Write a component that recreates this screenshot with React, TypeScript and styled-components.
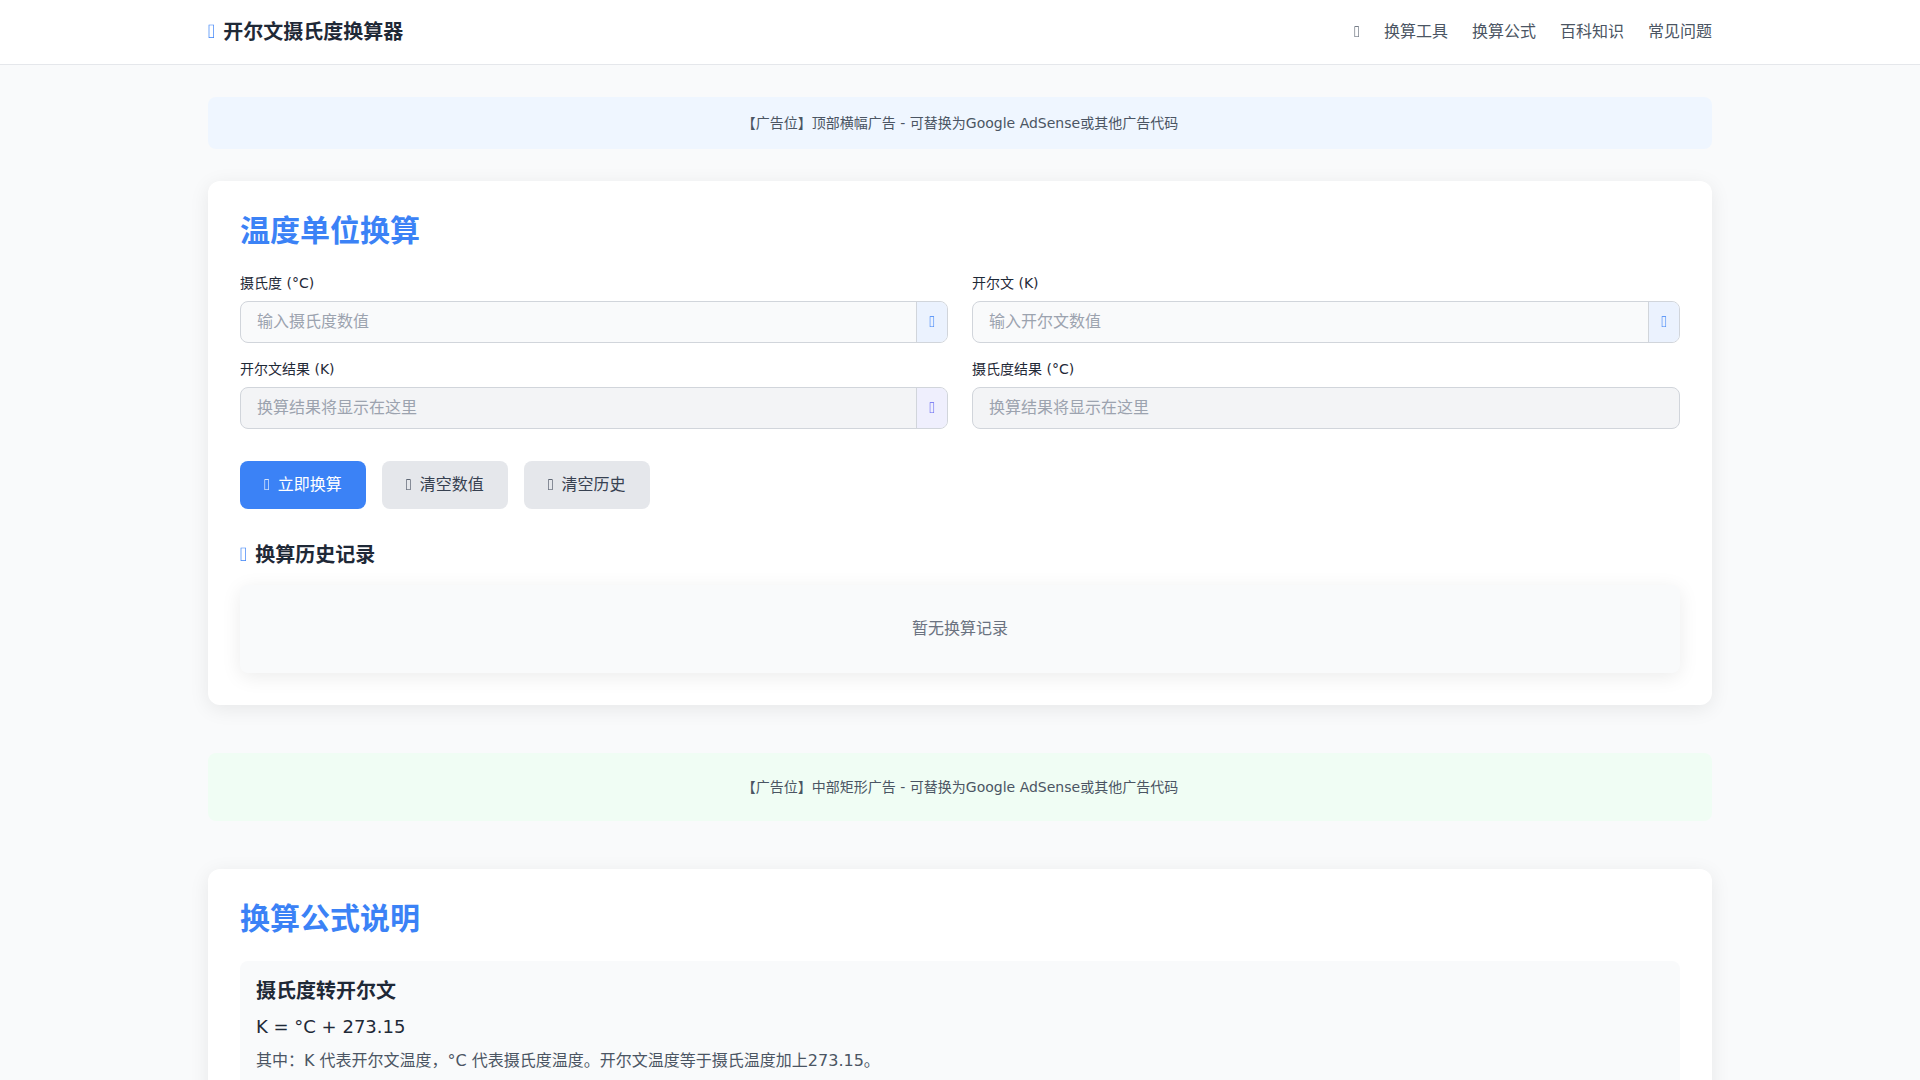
import React, { useState } from "react";
import styled, { createGlobalStyle } from "styled-components";

const GlobalStyle = createGlobalStyle`
  *, *::before, *::after { box-sizing: border-box; }
  body {
    margin: 0;
    background: #f9fafb;
    color: #1f2937;
    font-family: "DejaVu Sans", "Noto Sans CJK SC", sans-serif;
    font-size: 16px;
    line-height: 24px;
  }
  h1, h2, h3, p { margin: 0; }
  button, input { font: inherit; }
`;

const Header = styled.header`
  background: #ffffff;
  border-bottom: 1px solid #e5e7eb;
`;

const Container = styled.div`
  width: 100%;
  max-width: 1536px;
  margin: 0 auto;
  padding: 0 16px;
`;

const HeaderRow = styled(Container)`
  display: flex;
  align-items: center;
  justify-content: space-between;
  height: 64px;
`;

const Glyph = styled.i.attrs({ "aria-hidden": true })<{ $color?: string }>`
  font-family: "WenQuanYi Zen Hei", "Noto Sans", sans-serif;
  font-style: normal;
  font-weight: 400;
  line-height: 1;
  color: ${(p) => p.$color ?? "inherit"};
`;

const IconTitle = styled.div`
  display: flex;
  align-items: center;
  gap: 8px;
  font-size: 20px;
  line-height: 28px;
`;

const Brand = styled.h1`
  font-size: 20px;
  line-height: 28px;
  font-weight: 700;
`;

const Nav = styled.nav`
  display: flex;
  align-items: center;
  gap: 24px;
  color: #4b5563;
`;

const NavLink = styled.a`
  color: inherit;
  text-decoration: none;
  &:hover { color: #3b82f6; }
`;

const ThemeToggle = styled.button`
  padding: 0;
  border: 0;
  background: none;
  color: inherit;
  cursor: pointer;
`;

const Main = styled(Container).attrs({ as: "main" })`
  padding-top: 32px;
  padding-bottom: 32px;
`;

const AdSlot = styled.aside<{ $bg: string; $pad: number; $gap: number }>`
  padding: ${(p) => p.$pad}px 16px;
  margin-bottom: ${(p) => p.$gap}px;
  border-radius: 8px;
  background: ${(p) => p.$bg};
  color: #4b5563;
  font-size: 14px;
  line-height: 20px;
  text-align: center;
`;

const Card = styled.section`
  padding: 32px;
  margin-bottom: 48px;
  border-radius: 12px;
  background: #ffffff;
  box-shadow: 0 4px 20px rgba(0, 0, 0, 0.08);
`;

const CardTitle = styled.h2`
  margin-bottom: 24px;
  color: #3b82f6;
  font-size: 30px;
  line-height: 36px;
  font-weight: 700;
`;

const Fields = styled.div`
  display: grid;
  grid-template-columns: repeat(2, minmax(0, 1fr));
  gap: 16px 24px;
`;

const Label = styled.label`
  display: block;
  margin-bottom: 8px;
  font-size: 14px;
  line-height: 20px;
`;

const InputGroup = styled.div<{ $readOnly?: boolean }>`
  display: flex;
  height: 42px;
  overflow: hidden;
  border: 1px solid #d1d5db;
  border-radius: 8px;
  background: ${(p) => (p.$readOnly ? "#f3f4f6" : "#f9fafb")};
`;

const Input = styled.input`
  flex: 1;
  min-width: 0;
  padding: 8px 16px;
  border: 0;
  outline: 0;
  background: transparent;
  color: #1f2937;
  &::placeholder { color: #9ca3af; opacity: 1; }
`;

const Addon = styled.span<{ $bg: string }>`
  display: flex;
  align-items: center;
  padding: 0 12px;
  border-left: 1px solid #d1d5db;
  background: ${(p) => p.$bg};
`;

const Actions = styled.div`
  display: flex;
  gap: 16px;
  margin: 32px 0;
`;

const Button = styled.button<{ $primary?: boolean }>`
  display: flex;
  align-items: center;
  gap: 8px;
  padding: 12px 24px;
  border: 0;
  border-radius: 8px;
  background: ${(p) => (p.$primary ? "#3b82f6" : "#e5e7eb")};
  color: ${(p) => (p.$primary ? "#ffffff" : "#374151")};
  cursor: pointer;
`;

const SubTitle = styled.h3`
  font-size: 20px;
  line-height: 28px;
  font-weight: 700;
`;

const History = styled.div`
  margin-top: 16px;
  padding: 32px;
  border-radius: 8px;
  background: #f9fafb;
  color: #6b7280;
  text-align: center;
  box-shadow: 0 4px 20px rgba(0, 0, 0, 0.08);
`;

const FormulaBox = styled.div`
  display: grid;
  gap: 8px;
  padding: 16px;
  border-radius: 8px;
  background: #f9fafb;
`;

const Formula = styled.p`
  font-size: 18px;
  line-height: 28px;
`;

const Note = styled.p`
  color: #4b5563;
`;

const blue = "#3b82f6";
const indigo = "#6366f1";

type FieldProps = {
  id: string;
  label: string;
  placeholder: string;
  value: string;
  onChange?: (v: string) => void;
  addon?: { glyph: string; color: string; bg: string };
};

function Field({ id, label, placeholder, value, onChange, addon }: FieldProps) {
  return (
    <div>
      <Label htmlFor={id}>{label}</Label>
      <InputGroup $readOnly={!onChange}>
        <Input
          id={id}
          placeholder={placeholder}
          value={value}
          readOnly={!onChange}
          onChange={(e) => onChange?.(e.target.value)}
        />
        {addon && (
          <Addon $bg={addon.bg}>
            <Glyph $color={addon.color}>{addon.glyph}</Glyph>
          </Addon>
        )}
      </InputGroup>
    </div>
  );
}

export default function App() {
  const [celsius, setCelsius] = useState("");
  const [kelvin, setKelvin] = useState("");
  const [results, setResults] = useState({ k: "", c: "" });
  const [history, setHistory] = useState<string[]>([]);

  const convert = () => {
    const k = celsius === "" ? "" : (Number(celsius) + 273.15).toFixed(2);
    const c = kelvin === "" ? "" : (Number(kelvin) - 273.15).toFixed(2);
    setResults({ k, c });
    const rows = [k && `${celsius} °C = ${k} K`, c && `${kelvin} K = ${c} °C`].filter(Boolean);
    setHistory([...rows, ...history]);
  };

  const clear = () => {
    setCelsius("");
    setKelvin("");
    setResults({ k: "", c: "" });
  };

  return (
    <>
      <GlobalStyle />
      <Header>
        <HeaderRow>
          <IconTitle>
            <Glyph $color={blue}>{"\uf2c9"}</Glyph>
            <Brand>开尔文摄氏度换算器</Brand>
          </IconTitle>
          <Nav>
            <ThemeToggle type="button" aria-label="切换主题"><Glyph>{"\uf186"}</Glyph></ThemeToggle>
            <NavLink href="#converter">换算工具</NavLink>
            <NavLink href="#formula">换算公式</NavLink>
            <NavLink href="#knowledge">百科知识</NavLink>
            <NavLink href="#faq">常见问题</NavLink>
          </Nav>
        </HeaderRow>
      </Header>
      <Main>
        <AdSlot $bg="#eff6ff" $pad={16} $gap={32}>
          【广告位】顶部横幅广告 - 可替换为Google AdSense或其他广告代码
        </AdSlot>
        <Card id="converter">
          <CardTitle>温度单位换算</CardTitle>
          <Fields>
            <Field id="celsius" label="摄氏度 (°C)" placeholder="输入摄氏度数值" value={celsius}
              onChange={setCelsius} addon={{ glyph: "\uf0ec", color: blue, bg: "#ebf2fe" }} />
            <Field id="kelvin" label="开尔文 (K)" placeholder="输入开尔文数值" value={kelvin}
              onChange={setKelvin} addon={{ glyph: "\uf0ec", color: blue, bg: "#ebf2fe" }} />
            <Field id="kelvin-result" label="开尔文结果 (K)" placeholder="换算结果将显示在这里" value={results.k}
              addon={{ glyph: "\uf0c5", color: indigo, bg: "#efeffd" }} />
            <Field id="celsius-result" label="摄氏度结果 (°C)" placeholder="换算结果将显示在这里" value={results.c} />
          </Fields>
          <Actions>
            <Button type="button" $primary onClick={convert}><Glyph>{"\uf1ec"}</Glyph>立即换算</Button>
            <Button type="button" onClick={clear}><Glyph>{"\uf12d"}</Glyph>清空数值</Button>
            <Button type="button" onClick={() => setHistory([])}><Glyph>{"\uf1f8"}</Glyph>清空历史</Button>
          </Actions>
          <IconTitle>
            <Glyph $color={blue}>{"\uf1da"}</Glyph>
            <SubTitle>换算历史记录</SubTitle>
          </IconTitle>
          <History>
            {history.length === 0 ? "暂无换算记录" : history.map((row, i) => <p key={i}>{row}</p>)}
          </History>
        </Card>
        <AdSlot $bg="#f0fdf4" $pad={24} $gap={48}>
          【广告位】中部矩形广告 - 可替换为Google AdSense或其他广告代码
        </AdSlot>
        <Card id="formula">
          <CardTitle>换算公式说明</CardTitle>
          <FormulaBox>
            <SubTitle>摄氏度转开尔文</SubTitle>
            <Formula>K = °C + 273.15</Formula>
            <Note>其中：K 代表开尔文温度，°C 代表摄氏度温度。开尔文温度等于摄氏温度加上273.15。</Note>
          </FormulaBox>
        </Card>
      </Main>
    </>
  );
}
